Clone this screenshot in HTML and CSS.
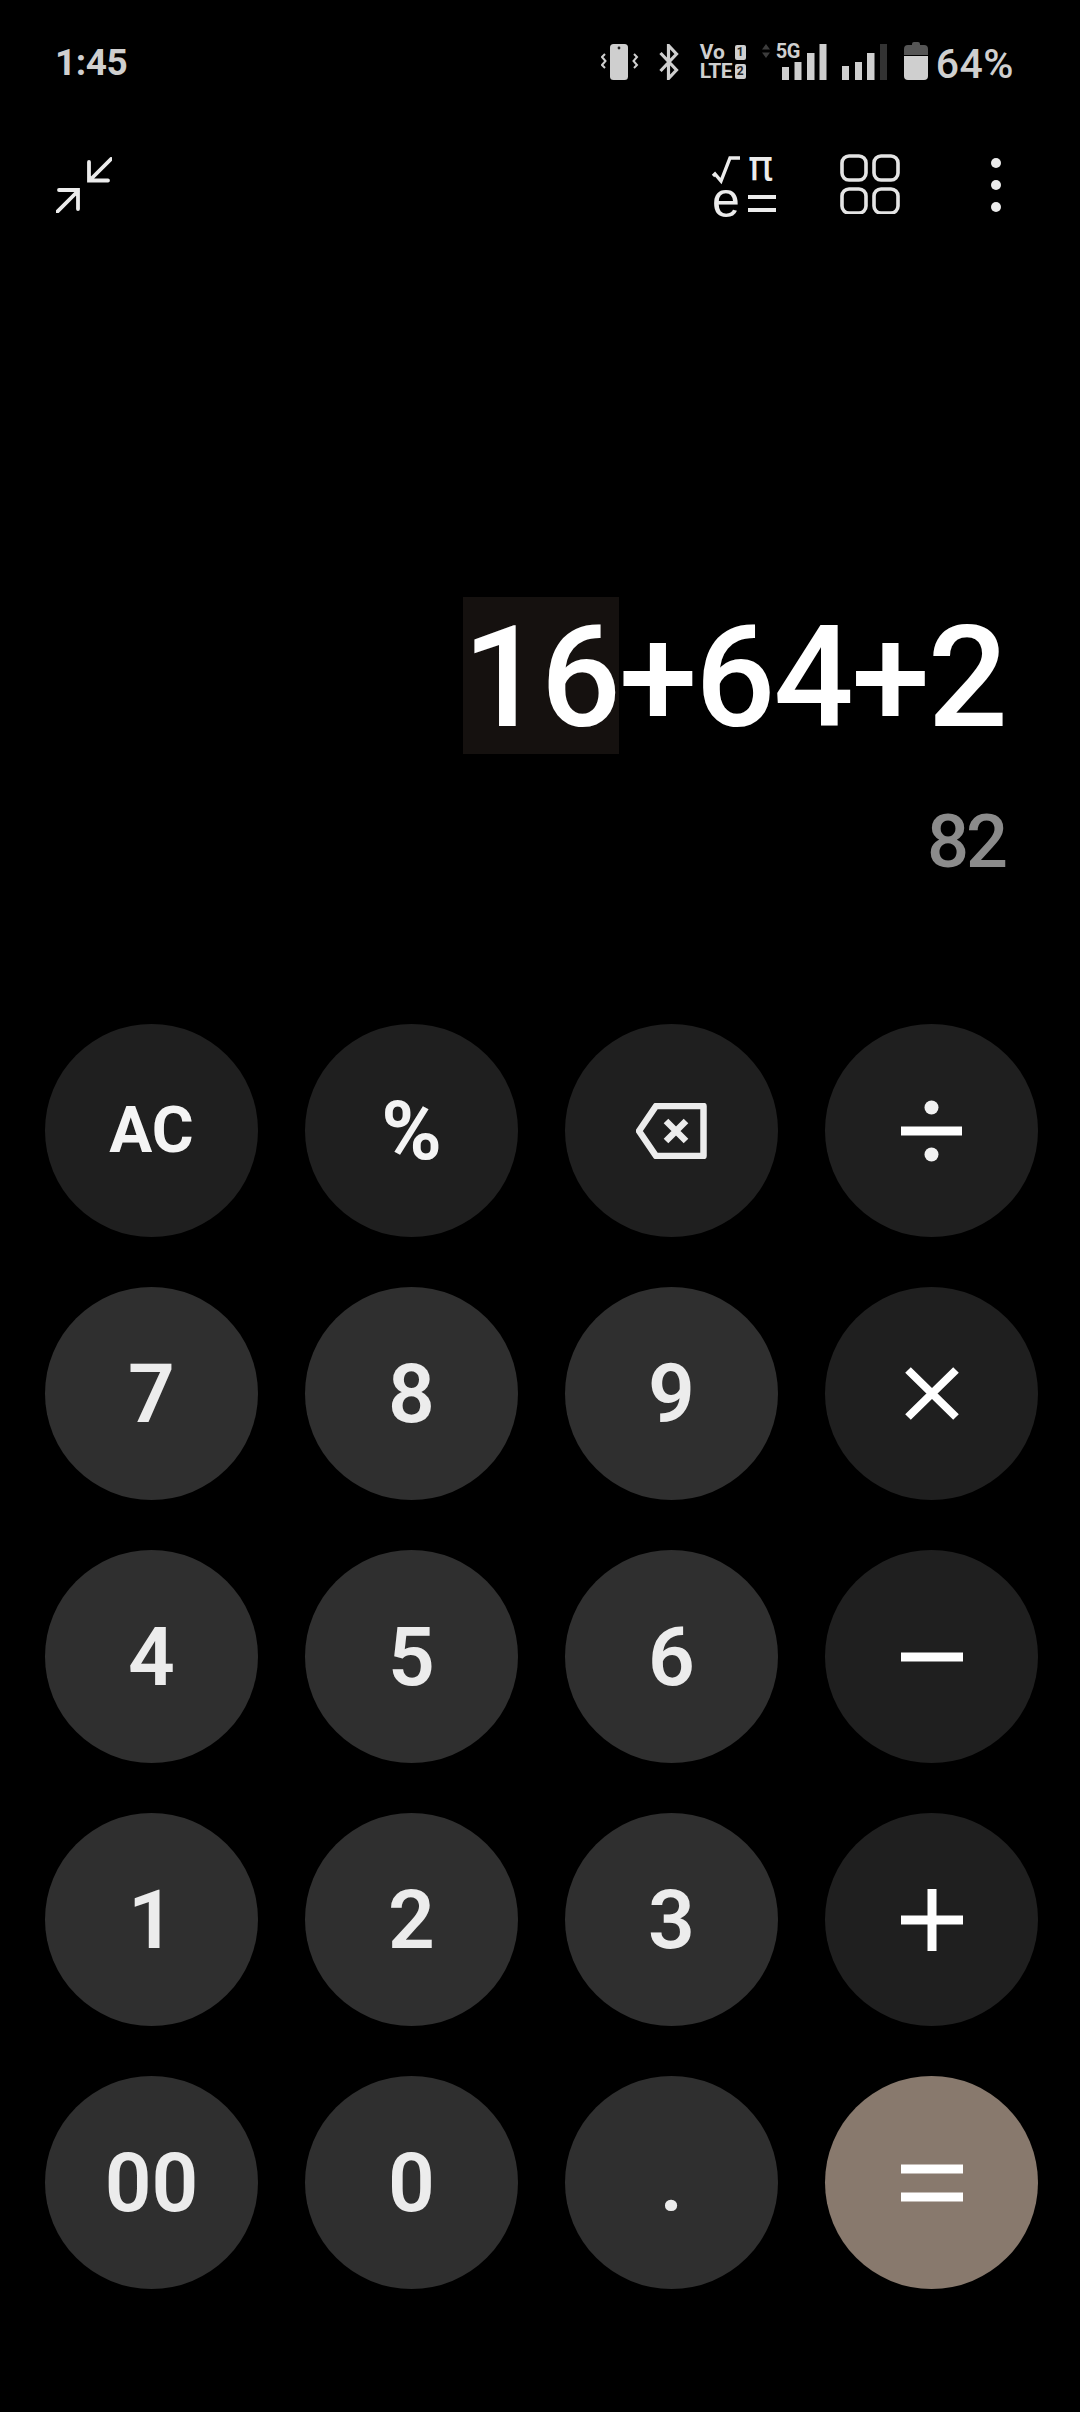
FILE: index.html
```html
<!DOCTYPE html>
<html lang="en">
<head>
<meta charset="utf-8">
<title>Calculator</title>
<link rel="stylesheet" href="styles.css">
</head>
<body>
<main class="screen">
  <header class="status">
    <span class="time">1:45</span>
    <div class="status-icons">
      <svg class="ic-vibrate" viewBox="0 0 38 36" width="38" height="36">
        <rect x="9" y="0" width="18" height="36" rx="3.500" fill="#cfcfcf"/>
        <circle cx="18" cy="4" r="1.400" fill="#222"/>
        <path d="M4 10l-3 3 3.500 4-3.500 4 3 3M33 10l3 3-3.500 4 3.500 4-3 3" fill="none" stroke="#cfcfcf" stroke-width="2"/>
      </svg>
      <svg class="ic-bt" viewBox="0 0 20 36" width="20" height="36">
        <path d="M1.500 9l16 17-8 8.500V1.500l8 8.500-16 17" fill="none" stroke="#cfcfcf" stroke-width="3.200"/>
      </svg>
      <div class="volte">
        <div class="volte-row"><span class="vo">Vo</span><span class="sim">1</span></div>
        <div class="volte-row"><span class="lte">LTE</span><span class="sim sim-num">2</span></div>
      </div>
      <div class="net">
        <svg class="ic-updown" viewBox="0 0 8 14" width="8" height="14"><path d="M4 0l4 5.500H0zM4 14L0 8.500h8z" fill="#3c3c3c"/></svg>
        <span class="fiveg">5G</span>
      </div>
      <svg class="ic-signal" viewBox="0 0 45 36" width="45" height="36">
        <rect x="0" y="23" width="7" height="13" fill="#cfcfcf"/>
        <rect x="12.500" y="18" width="7" height="18" fill="#cfcfcf"/>
        <rect x="25" y="9" width="7.500" height="27" fill="#cfcfcf"/>
        <rect x="37.500" y="0" width="7" height="36" fill="#cfcfcf"/>
      </svg>
      <svg class="ic-signal2" viewBox="0 0 45 36" width="45" height="36">
        <rect x="0" y="22" width="7" height="14" fill="#cfcfcf"/>
        <rect x="13" y="18" width="7" height="18" fill="#cfcfcf"/>
        <rect x="25" y="9" width="7.500" height="27" fill="#cfcfcf"/>
        <rect x="38" y="0" width="7" height="36" fill="#333"/>
      </svg>
      <svg class="ic-battery" viewBox="0 0 24 38" width="24" height="38">
        <path d="M8 3V2a2 2 0 0 1 2-2h4a2 2 0 0 1 2 2v1h4a4 4 0 0 1 4 4v6H0V7a4 4 0 0 1 4-4z" fill="#555"/>
        <path d="M0 14h24v20a4 4 0 0 1-4 4H4a4 4 0 0 1-4-4z" fill="#cfcfcf"/>
      </svg>
      <span class="pct">64%</span>
    </div>
  </header>

  <nav class="toolbar">
    <svg class="ic-collapse" viewBox="0 0 56 56" width="56" height="56">
      <path d="M55 2L34 23M33 5v18.500h19M1 55l21-21M3 33h19v19" fill="none" stroke="#ececec" stroke-width="3.800" stroke-linecap="round"/>
    </svg>
    <div class="toolbar-right">
      <svg class="ic-sci" viewBox="0 0 68 66" width="68" height="66">
        <path d="M3 22l2-2 6 7 9-23h10" fill="none" stroke="#ececec" stroke-width="3.400"/>
        <text class="sci-pi" x="38" y="26">π</text>
        <text class="sci-e" x="2" y="63">e</text>
        <path d="M38 43h28M38 56h28" stroke="#ececec" stroke-width="3.800"/>
      </svg>
      <svg class="ic-grid" viewBox="0 0 60 60" width="60" height="60">
        <g fill="none" stroke="#e4e4e4" stroke-width="3.600">
          <rect x="2" y="2" width="24" height="24" rx="7"/>
          <rect x="34" y="2" width="24" height="24" rx="7"/>
          <rect x="2" y="35" width="24" height="24" rx="7"/>
          <rect x="34" y="35" width="24" height="24" rx="7"/>
        </g>
      </svg>
      <svg class="ic-more" viewBox="0 0 10 54" width="10" height="54">
        <g fill="#ececec"><circle cx="5" cy="5" r="5"/><circle cx="5" cy="27" r="5"/><circle cx="5" cy="49" r="5"/></g>
      </svg>
    </div>
  </nav>

  <section class="display">
    <div class="expr"><span class="sel">16</span>+64+2</div>
    <div class="result">82</div>
  </section>

  <section class="keypad">
    <div class="key fn word">AC</div>
    <div class="key fn pctkey">%</div>
    <div class="key fn">
      <svg viewBox="0 0 72 56" width="72" height="56"><path d="M3 28L20 3h47.500v50H20zM30 18l20 20M50 18L30 38" fill="none" stroke="#ececec" stroke-width="6.500" stroke-linejoin="round"/></svg>
    </div>
    <div class="key fn">
      <svg viewBox="0 0 62 62" width="62" height="62"><path d="M0 31h61" stroke="#fff" stroke-width="9"/><circle cx="30.500" cy="7.500" r="7" fill="#f2f2f2"/><circle cx="30.500" cy="54.500" r="7" fill="#f2f2f2"/></svg>
    </div>

    <div class="key">7</div>
    <div class="key">8</div>
    <div class="key">9</div>
    <div class="key fn">
      <svg viewBox="0 0 62 62" width="62" height="62"><path d="M7 7l48 47M55 7L7 54" stroke="#fff" stroke-width="8"/></svg>
    </div>

    <div class="key">4</div>
    <div class="key">5</div>
    <div class="key">6</div>
    <div class="key fn">
      <svg viewBox="0 0 62 62" width="62" height="62"><path d="M0 31h62" stroke="#fff" stroke-width="9"/></svg>
    </div>

    <div class="key">1</div>
    <div class="key">2</div>
    <div class="key">3</div>
    <div class="key fn">
      <svg viewBox="0 0 62 62" width="62" height="62"><path d="M0 31h62M31 0v62" stroke="#fff" stroke-width="9"/></svg>
    </div>

    <div class="key">00</div>
    <div class="key">0</div>
    <div class="key">.</div>
    <div class="key eq">
      <svg viewBox="0 0 62 38" width="62" height="38"><path d="M0 5h62M0 33h62" stroke="#fff" stroke-width="9"/></svg>
    </div>
  </section>
</main>
</body>
</html>
```

FILE: styles.css
```css
* {
  box-sizing: border-box;
}

html,
body {
  margin: 0;
  padding: 0;
  background: #000;
}

body {
  font-family: Roboto, "Liberation Sans", sans-serif;
}

svg {
  display: block;
  flex: none;
}

.screen {
  width: 1080px;
  height: 2412px;
  display: flex;
  flex-direction: column;
  background: #000;
  overflow: hidden;
}

/* status bar */
.status {
  height: 42px;
  margin-top: 42px;
  display: flex;
  justify-content: space-between;
  align-items: flex-start;
  padding: 0 66px 0 55px;
}

.time {
  font-size: 37px;
  line-height: 42px;
  font-weight: 700;
  letter-spacing: -0.5px;
  color: #cfcfcf;
}

.status-icons {
  display: flex;
  align-items: flex-start;
}

.ic-vibrate {
  margin-top: 2px;
}

.ic-bt {
  margin: 2px 0 0 20px;
}

.volte {
  margin: 2px 0 0 21px;
  width: 46px;
  display: flex;
  flex-direction: column;
  gap: 3px;
}

.volte-row {
  height: 16px;
  display: flex;
  justify-content: space-between;
  align-items: center;
  color: #cfcfcf;
  font-weight: 700;
  line-height: 16px;
}

.vo {
  font-size: 21px;
}

.lte {
  font-size: 21px;
  letter-spacing: -0.5px;
}

.sim {
  width: 11px;
  height: 15px;
  border-radius: 2px;
  background: #cfcfcf;
  color: #222;
  font-size: 12px;
  line-height: 15px;
  text-align: center;
}

.net {
  margin: 2px 0 0 16px;
  width: 38px;
  display: flex;
  align-items: center;
  gap: 6px;
  height: 14px;
}

.fiveg {
  font-size: 20px;
  line-height: 14px;
  font-weight: 700;
  color: #cfcfcf;
  letter-spacing: -0.5px;
}

.ic-signal {
  margin: 2px 0 0 -18px;
}

.ic-signal2 {
  margin: 2px 0 0 15px;
}

.ic-battery {
  margin-left: 17px;
}

.pct {
  margin-left: 8px;
  font-size: 41px;
  line-height: 44px;
  font-weight: 500;
  letter-spacing: 0.5px;
  color: #cfcfcf;
}

/* toolbar */
.toolbar {
  height: 66px;
  margin-top: 68px;
  padding: 0 79px 0 56px;
  display: flex;
  justify-content: space-between;
  align-items: flex-start;
}

.ic-collapse {
  margin-top: 5px;
}

.toolbar-right {
  display: flex;
  align-items: flex-start;
}

.sci-pi {
  font-family: "DejaVu Sans", sans-serif;
  font-size: 42px;
  fill: #ececec;
}

.sci-e {
  font-family: "Liberation Sans", sans-serif;
  font-size: 50px;
  fill: #ececec;
}

.ic-sci {
  margin-top: 2px;
  overflow: visible;
}

.ic-grid {
  margin: 2px 0 0 62px;
}

.ic-more {
  margin: 6px 0 0 91px;
}

/* display */
.display {
  height: 806px;
  padding: 379px 74px 0 0;
  text-align: right;
}

.expr {
  font-size: 141px;
  line-height: 161px;
  font-weight: 500;
  letter-spacing: -2px;
  color: #fff;
  white-space: nowrap;
}

.sel {
  background: #15110f;
  display: inline-block;
  height: 157px;
}

.result {
  margin: 41px 1px 0 0;
  font-size: 74px;
  line-height: 86px;
  font-weight: 500;
  letter-spacing: -3px;
  color: #8b8b8b;
}

/* keypad */
.keypad {
  padding: 0 45px;
  display: grid;
  grid-template-columns: repeat(4, 213px);
  grid-auto-rows: 213px;
  column-gap: 47px;
  row-gap: 50px;
}

.key {
  border-radius: 50%;
  background: #2f2f2f;
  color: #ececec;
  display: flex;
  align-items: center;
  justify-content: center;
  font-size: 82px;
  font-weight: 600;
  line-height: 1;
}

.fn {
  background: #1f1f1f;
}

.word {
  font-size: 64px;
  font-weight: 700;
  color: #f4f4f4;
}

.pctkey {
  font-size: 82px;
  font-weight: 700;
  color: #f4f4f4;
}

.eq {
  background: #88796d;
}
```
